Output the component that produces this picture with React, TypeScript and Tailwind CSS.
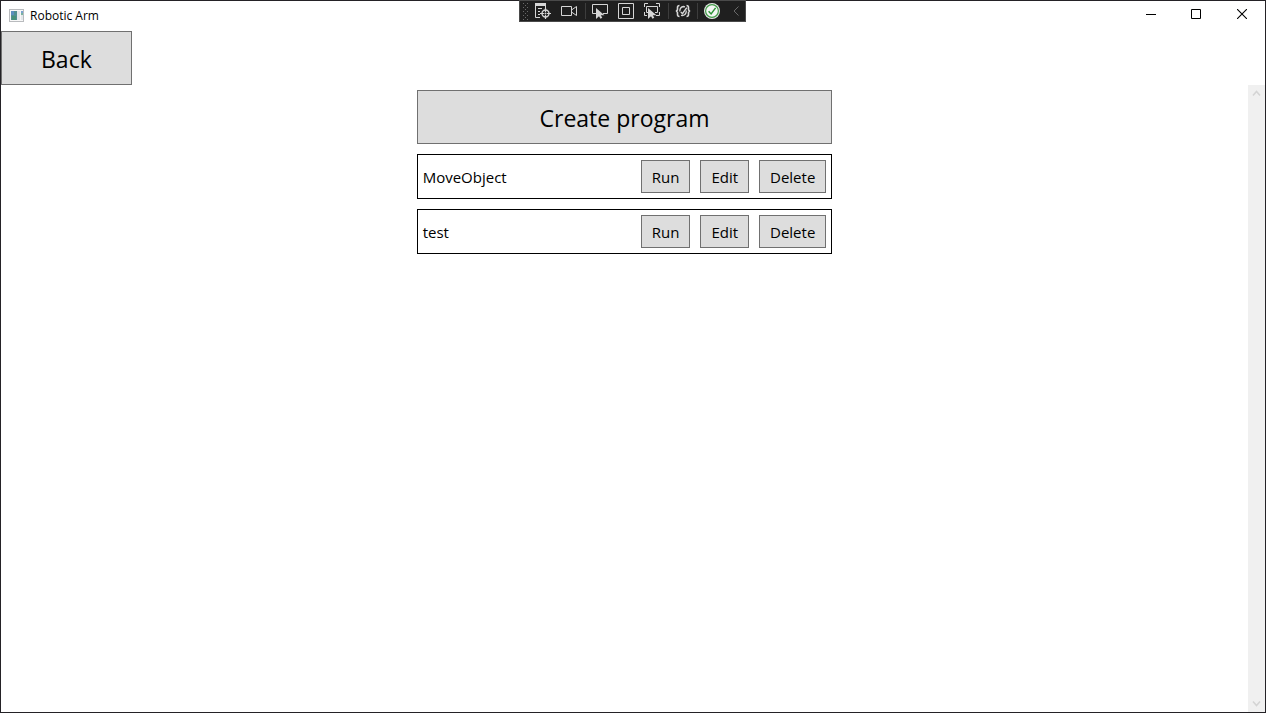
import { useState } from "react";

const PROGRAMS = ["MoveObject", "test"];

const face =
  "border border-[#707070] bg-[#dddddd] text-black hover:border-[#3c7fb1] hover:bg-[#bee6fd]";
const smallButton = `${face} h-[33px] px-2.5 text-[15px] leading-5`;
const largeButton = `${face} h-[54px] px-[39px] pt-0.5 text-[23px] leading-8`;

function AppIcon() {
  return (
    <svg width="16" height="16" viewBox="0 0 16 16" aria-hidden="true" shapeRendering="crispEdges">
      <rect x="0.5" y="1.5" width="14" height="12" fill="#f8f8f8" stroke="#b9bbbe" />
      <rect x="2" y="3" width="6" height="9" fill="#4f8f92" />
      <rect x="2" y="3" width="3" height="4" fill="#5b8fbf" />
      <rect x="3" y="8" width="4" height="4" fill="#469079" />
      <rect x="8" y="3" width="3" height="9" fill="#e3e7ea" />
      <rect x="12" y="3" width="2" height="2" fill="#7aa2d0" />
      <rect x="12" y="5" width="2" height="2" fill="#79b3a0" />
      <rect x="12" y="7" width="2" height="5" fill="#e3e7ea" />
    </svg>
  );
}

const toolIcon = {
  width: 16,
  height: 16,
  viewBox: "0 0 16 16",
  fill: "none",
  stroke: "#d6d6d6",
  "aria-hidden": true,
} as const;

const pointer = "M4 5v11l3-2.800 1.500 2.600 1.800-1-1.500-2.600h3.700z";

function GoToTree() {
  return (
    <svg {...toolIcon}>
      <path d="M0 0h11v3H0z" fill="#d6d6d6" stroke="none" />
      <path d="M.5 3v11.5H5M10.5 3v2M3 5.5h4M3 8.5h2M3 11.5h2" />
      <circle cx="10.5" cy="10.5" r="3.5" strokeWidth="1.4" />
      <path d="M10.5 5v4M10.5 12v4M5 10.5h4M12 10.5h4" strokeWidth="1.2" />
      <circle cx="10.5" cy="10.5" r="1" fill="#d6d6d6" stroke="none" />
    </svg>
  );
}

function Camera() {
  return (
    <svg {...toolIcon}>
      <path d="M.5 3.5h10v9H.5zM10.5 7l5-3.5v9l-5-3.5" />
    </svg>
  );
}

function SelectElement() {
  return (
    <svg {...toolIcon}>
      <path d="M4 10.5H.5v-9h15v9H11" />
      <path d={pointer} fill="#d6d6d6" stroke="none" />
    </svg>
  );
}

function LayoutBounds() {
  return (
    <svg {...toolIcon}>
      <path d="M.5.5h15v15H.5zM4.5 4.5h7v7h-7z" />
    </svg>
  );
}

function TrackFocus() {
  return (
    <svg {...toolIcon}>
      <path d="M.5 4V.5H4M12 .5h3.5V4M.5 9v3.5H3M15.5 9v3.5H12M4 9.500H2.500v-6h11v6H11" />
      <path d={pointer} fill="#d6d6d6" stroke="none" />
    </svg>
  );
}

function BindingFailures() {
  return (
    <svg {...toolIcon} strokeWidth="1.6">
      <path d="M4.500 2.500C2.800 2.500 2.500 3.200 2.500 4.500v1.500C2.500 7.200 2 8 .8 8c1.200 0 1.700.8 1.700 2v1.500c0 1.300.3 2 2 2M11.500 2.500c1.700 0 2 .7 2 2v1.500c0 1.200.5 2 1.700 2-1.200 0-1.700.8-1.700 2v1.500c0 1.300-.3 2-2 2" />
      <path d="M10 3.800 8.500 3.500C6 3.800 4.800 5.800 4.800 8.500M6 12.300l1.500.2C10 12.200 11.300 10.200 11.300 7.500" strokeWidth="1.300" />
      <path d="m5.800 9 1.700 1.700L11.800 4.600" strokeWidth="1.500" />
    </svg>
  );
}

function StatusOk() {
  return (
    <svg {...toolIcon}>
      <circle cx="8" cy="8" r="8" fill="#e8e8e8" stroke="none" />
      <circle cx="8" cy="8" r="6.400" fill="#f3f6f3" stroke="#429b48" strokeWidth="1.200" />
      <path d="m4.600 8.300 2.500 2.600 4.500-6" stroke="#2c9236" strokeWidth="1.500" />
    </svg>
  );
}

function Separator() {
  return <span className="h-4 w-px bg-[#3d3d3d]" />;
}

function DebugToolbar() {
  return (
    <div className="pointer-events-none absolute inset-x-0 -top-px flex justify-center pr-px">
      <div
        role="toolbar"
        aria-label="Debug tools"
        className="pointer-events-auto flex h-[22px] w-[227px] items-center border border-[#4a4a4a] bg-[#1f1f1f] pl-[3px]"
      >
        <svg width="6" height="18" viewBox="0 0 6 18" className="mr-1.5" aria-hidden="true">
          <path d="M.5 1v17M4.500 1v17" stroke="#6a6a6a" strokeDasharray="1 3" />
          <path d="M2.500 3v15" stroke="#6a6a6a" strokeDasharray="1 3" />
        </svg>
        <div className="flex gap-2.5">
          <button aria-label="Go to live visual tree"><GoToTree /></button>
          <button aria-label="Show in XAML live preview"><Camera /></button>
        </div>
        <div className="flex items-center gap-1.5 pl-2">
          <Separator />
          <div className="flex gap-2.5">
            <button aria-label="Select element"><SelectElement /></button>
            <button aria-label="Display layout adorners"><LayoutBounds /></button>
            <button aria-label="Track focused element"><TrackFocus /></button>
          </div>
        </div>
        <div className="flex items-center gap-1.5 pl-2">
          <Separator />
          <button aria-label="Binding failures"><BindingFailures /></button>
          <Separator />
          <button aria-label="Hot reload available"><StatusOk /></button>
        </div>
        <button aria-label="Collapse toolbar" className="ml-3">
          <svg width="8" height="10" viewBox="0 0 8 10" fill="none" stroke="#6a6a6a" aria-hidden="true">
            <path d="M6.500.5 2 5l4.500 4.500" />
          </svg>
        </button>
      </div>
    </div>
  );
}

function WindowButtons() {
  return (
    <div className="flex h-full pb-1">
      <button aria-label="Minimize" className="flex w-11 items-center justify-center hover:bg-gray-200">
        <svg width="10" height="10" viewBox="0 0 10 10" stroke="#000" aria-hidden="true">
          <path d="M0 5.500h10" />
        </svg>
      </button>
      <button aria-label="Maximize" className="flex w-[46px] items-center justify-center hover:bg-gray-200">
        <svg width="10" height="10" viewBox="0 0 10 10" fill="none" stroke="#000" aria-hidden="true">
          <path d="M.5.5h9v9h-9z" />
        </svg>
      </button>
      <button aria-label="Close" className="flex w-[46px] items-center justify-center hover:bg-red-500">
        <svg width="10" height="10" viewBox="0 0 10 10" stroke="#000" aria-hidden="true">
          <path d="m0 0 10 10M10 0 0 10" strokeWidth="1.100" />
        </svg>
      </button>
    </div>
  );
}

function ScrollTrack() {
  return (
    <div className="flex w-[17px] shrink-0 flex-col justify-between bg-[#f0f0f0]">
      <button aria-label="Scroll up" disabled className="flex h-[17px] items-center justify-center">
        <svg width="9" height="7" viewBox="0 0 9 7" fill="none" stroke="#d4d4d4" strokeWidth="1.500" aria-hidden="true">
          <path d="m1 5.500 3.500-4 3.500 4" />
        </svg>
      </button>
      <button aria-label="Scroll down" disabled className="flex h-[17px] items-center justify-center">
        <svg width="9" height="7" viewBox="0 0 9 7" fill="none" stroke="#d4d4d4" strokeWidth="1.500" aria-hidden="true">
          <path d="m1 1.500 3.500 4 3.500-4" />
        </svg>
      </button>
    </div>
  );
}

export default function App() {
  const [programs, setPrograms] = useState(PROGRAMS);

  return (
    <div className="relative flex min-h-screen flex-col border border-[#242226] bg-white font-['Open_Sans','Noto_Sans',sans-serif] text-black">
      <header className="flex h-[30px] items-center justify-between pl-2">
        <div className="flex items-center gap-[5px]">
          <AppIcon />
          <h1 className="text-xs">Robotic Arm</h1>
        </div>
        <WindowButtons />
      </header>

      <nav className="flex">
        <button className={largeButton}>Back</button>
      </nav>

      <div className="flex grow">
        <main className="grow">
          <div className="mx-auto flex w-1/3 min-w-80 flex-col gap-2.5 pt-[5px]">
            <button
              className={largeButton}
              onClick={() => setPrograms([...programs, `program${programs.length + 1}`])}
            >
              Create program
            </button>
            <ul className="flex flex-col gap-2.5">
              {programs.map((name) => (
                <li key={name} className="flex items-center justify-between border border-black p-[5px]">
                  <span className="text-[15px] leading-5">{name}</span>
                  <div className="flex gap-2.5">
                    <button className={smallButton}>Run</button>
                    <button className={smallButton}>Edit</button>
                    <button
                      className={smallButton}
                      onClick={() => setPrograms(programs.filter((p) => p !== name))}
                    >
                      Delete
                    </button>
                  </div>
                </li>
              ))}
            </ul>
          </div>
        </main>
        <ScrollTrack />
      </div>

      <DebugToolbar />
    </div>
  );
}
